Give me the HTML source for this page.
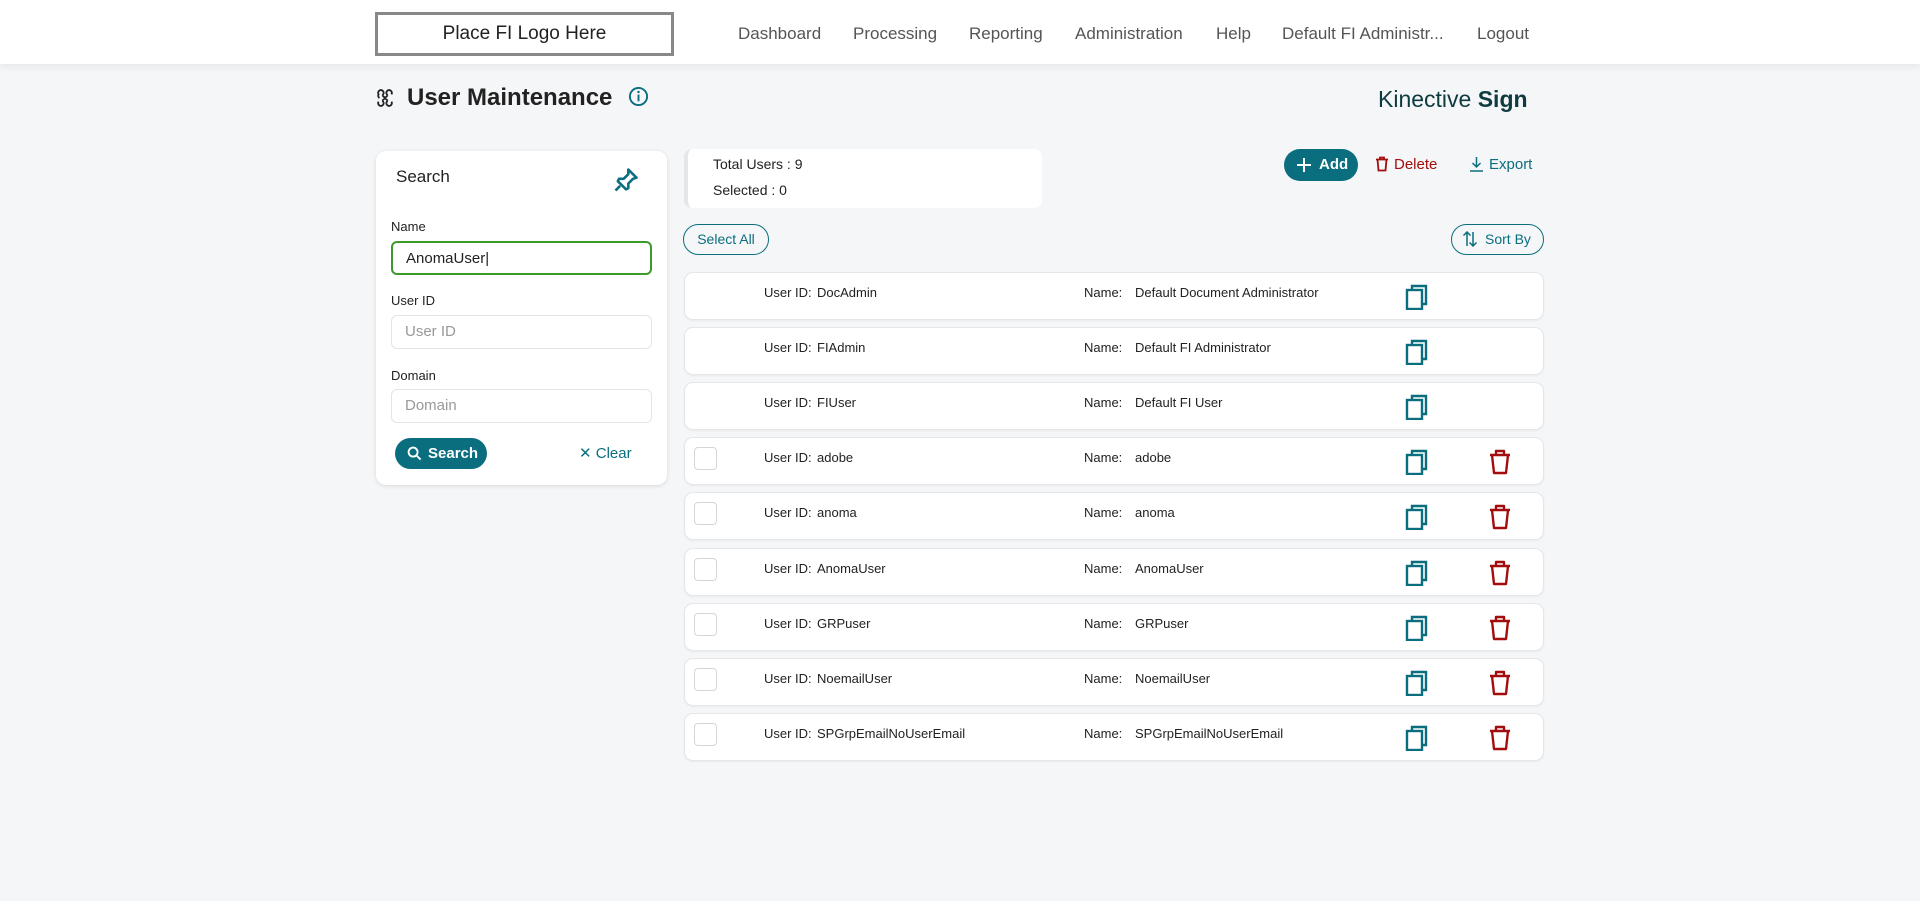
<!DOCTYPE html>
<html><head><meta charset="utf-8"><style>
*{box-sizing:border-box;margin:0;padding:0}
body{width:1920px;height:901px;background:#f5f6f8;font-family:"Liberation Sans",sans-serif;position:relative;overflow:hidden;color:#222}
.abs{position:absolute}
.hdr{left:0;top:0;width:1920px;height:64px;background:#fff;box-shadow:0 2px 8px rgba(0,0,0,.08)}
.logo{left:375px;top:12px;width:299px;height:44px;border:3px solid #888;font-size:19px;color:#222;text-align:center;line-height:38px}
.nav{top:24px;font-size:17px;color:#555;white-space:nowrap}
.card{background:#fff;border-radius:10px;box-shadow:0 1px 4px rgba(0,0,0,.12)}
.lbl{font-size:13px;color:#222}
.inp{left:391px;width:261px;height:34px;border:1px solid #e2e4e8;border-radius:6px;background:#fff;font-size:15px;color:#999;padding-left:13px;line-height:32px}
.row{left:684px;width:860px;height:48px;background:#fff;border-radius:9px;border:1px solid #e4e6ea;box-shadow:0 1px 2px rgba(0,0,0,.05)}
.row span{position:absolute;top:12px;font-size:13px;color:#222;white-space:nowrap}
.cb{position:absolute;left:9px;top:9px;width:23px;height:23px;border:1px solid #d4d6da;border-radius:4px}
.cp{position:absolute;left:720px;top:11px}
.tr{position:absolute;left:804px;top:11px}
</style></head><body>
<div class="abs hdr"></div>
<div class="abs logo">Place FI Logo Here</div>
<div class="abs nav" style="left:738px">Dashboard</div>
<div class="abs nav" style="left:853px">Processing</div>
<div class="abs nav" style="left:969px">Reporting</div>
<div class="abs nav" style="left:1075px">Administration</div>
<div class="abs nav" style="left:1216px">Help</div>
<div class="abs nav" style="left:1282px">Default FI Administr...</div>
<div class="abs nav" style="left:1477px">Logout</div>

<svg class="abs" style="left:374px;top:87px" width="22" height="22" viewBox="0 0 24 24" fill="none" stroke="#222" stroke-width="2"><path d="M9 9L15 15M15 9L9 15M9 9a3 3 0 1 0-4 -1 3 3 0 0 0 1 4M15 9a3 3 0 1 1 4 -1M15 15a3 3 0 1 0 4 1M9 15a3 3 0 1 1-4 1"/></svg>
<div class="abs" style="left:407px;top:84px;font-size:24px;font-weight:bold;color:#222">User Maintenance</div>
<svg class="abs" style="left:628px;top:86px" width="21" height="21" viewBox="0 0 22 22"><circle cx="11" cy="11" r="9" fill="none" stroke="#0b6e7f" stroke-width="2"/><rect x="10" y="9" width="2" height="7" fill="#0b6e7f"/><circle cx="11" cy="6.3" r="1.3" fill="#0b6e7f"/></svg>
<div class="abs" style="left:1378px;top:86px;font-size:23px;color:#0d3b40;white-space:nowrap">Kinective <b>Sign</b></div>

<div class="abs card" style="left:376px;top:151px;width:291px;height:334px"></div>
<div class="abs" style="left:396px;top:167px;font-size:17px;color:#222">Search</div>
<svg class="abs" style="left:612px;top:166px" width="28" height="28" viewBox="0 0 24 24" fill="none" stroke="#0b6e7f" stroke-width="2.2" stroke-linejoin="round"><path d="M14 3l7 7-3 1-4 4 0 4-2 1-7-7 1-2 4 0 4-4z"/><path d="M7 17l-4 4"/></svg>
<div class="abs lbl" style="left:391px;top:219px">Name</div>
<div class="abs inp" style="top:241px;border:2px solid #3b9a2a;color:#222">AnomaUser|</div>
<div class="abs lbl" style="left:391px;top:293px">User ID</div>
<div class="abs inp" style="top:315px">User ID</div>
<div class="abs lbl" style="left:391px;top:368px">Domain</div>
<div class="abs inp" style="top:389px">Domain</div>
<div class="abs" style="left:395px;top:438px;width:92px;height:31px;border-radius:16px;background:#0b6e7f;color:#fff;font-size:15px;font-weight:bold;line-height:31px;padding-left:33px">Search</div>
<svg class="abs" style="left:407px;top:446px" width="15" height="15" viewBox="0 0 16 16" fill="none" stroke="#fff" stroke-width="2"><circle cx="6.5" cy="6.5" r="4.8"/><path d="M10 10l4.5 4.5"/></svg>
<div class="abs" style="left:579px;top:444px;font-size:15px;color:#0b6e7f">✕ Clear</div>

<div class="abs" style="left:684px;top:149px;width:358px;height:59px;background:#fff;border-radius:8px;border-left:4px solid #e4e6ea"></div>
<div class="abs" style="left:713px;top:156px;font-size:14px;color:#222">Total Users : 9</div>
<div class="abs" style="left:713px;top:182px;font-size:14px;color:#222">Selected : 0</div>

<div class="abs" style="left:1284px;top:149px;width:74px;height:32px;border-radius:16px;background:#0b6e7f;color:#fff;font-size:15px;font-weight:bold;line-height:32px;padding-left:35px">Add</div>
<svg class="abs" style="left:1296px;top:157px" width="16" height="16" viewBox="0 0 16 16" stroke="#fff" stroke-width="2"><path d="M8 1v14M1 8h14"/></svg>
<svg class="abs" style="left:1375px;top:156px" width="14" height="16" viewBox="0 0 14 16" fill="none" stroke="#a30d0d" stroke-width="1.8"><path d="M1 3.5h12M5 3.5V1.5h4v2M2.5 3.5l1 11h7l1-11"/></svg>
<div class="abs" style="left:1394px;top:156px;font-size:15px;color:#a30d0d">Delete</div>
<svg class="abs" style="left:1469px;top:156px" width="15" height="16" viewBox="0 0 15 16" fill="none" stroke="#0b6e7f" stroke-width="1.5"><path d="M7.5 1v10M3.5 7l4 4 4-4M1 15h13"/></svg>
<div class="abs" style="left:1489px;top:156px;font-size:15px;color:#0b6e7f">Export</div>

<div class="abs" style="left:683px;top:224px;width:86px;height:31px;border:1px solid #0b6e7f;border-radius:16px;font-size:14px;color:#0b6e7f;text-align:center;line-height:29px">Select All</div>
<div class="abs" style="left:1451px;top:224px;width:93px;height:31px;border:1px solid #0b6e7f;border-radius:16px;font-size:14px;color:#0b6e7f;line-height:29px;padding-left:33px">Sort By</div>
<svg class="abs" style="left:1462px;top:231px" width="16" height="16" viewBox="0 0 16 16" fill="none" stroke="#0b6e7f" stroke-width="1.5"><path d="M5 15V1M1.5 4.5L5 1l3.5 3.5M11 1v14M7.5 11.5L11 15l3.5-3.5"/></svg>

<div id="rows"></div>
<script>
var d=[["DocAdmin","Default Document Administrator",0],["FIAdmin","Default FI Administrator",0],["FIUser","Default FI User",0],["adobe","adobe",1],["anoma","anoma",1],["AnomaUser","AnomaUser",1],["GRPuser","GRPuser",1],["NoemailUser","NoemailUser",1],["SPGrpEmailNoUserEmail","SPGrpEmailNoUserEmail",1]];
var cp='<svg class="cp" width="24" height="26" viewBox="0 0 24 26" fill="none" stroke="#0b6e7f" stroke-width="2.4"><path d="M7 6V2h14v18h-4"/><rect x="2" y="6" width="15" height="19"/></svg>';
var tr='<svg class="tr" width="22" height="26" viewBox="0 0 22 26" fill="none" stroke="#a30d0d" stroke-width="2.4" stroke-linejoin="round"><path d="M1 6h20M7 6V2h8v4M3 6l2 18h12l2-18"/></svg>';
var h='';
d.forEach(function(r,i){var t=Math.round(272+i*55.1);
h+='<div class="abs row" style="top:'+t+'px">'+(r[2]?'<div class="cb"></div>':'')+'<span style="left:79px">User ID:</span><span style="left:132px">'+r[0]+'</span><span style="left:399px">Name:</span><span style="left:450px">'+r[1]+'</span>'+cp+(r[2]?tr:'')+'</div>';});
document.getElementById('rows').innerHTML=h;
</script>
</body></html>
